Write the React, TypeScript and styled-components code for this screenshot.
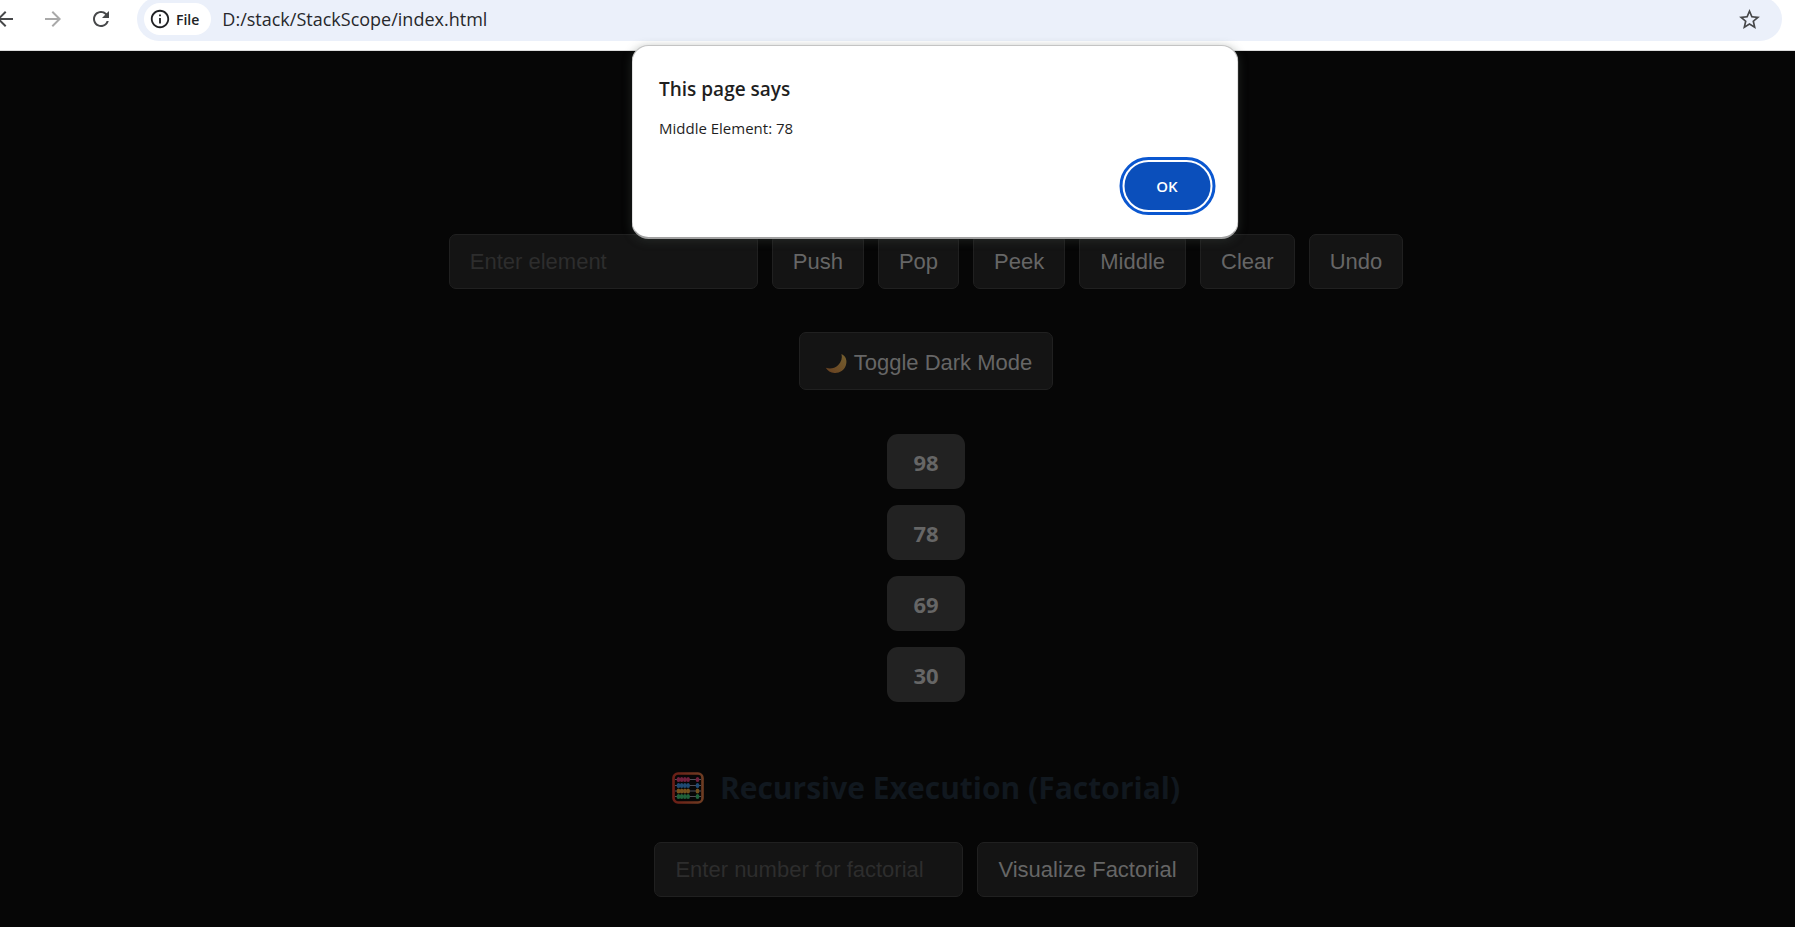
import React from "react";
import styled, { createGlobalStyle } from "styled-components";
import {
  MdArrowBack,
  MdArrowForward,
  MdOutlineInfo,
  MdRefresh,
  MdStarOutline,
} from "react-icons/md";

const uiFont = '"Open Sans", "Noto Sans", sans-serif';
const controlFont = '"Liberation Sans", Arial, sans-serif';

const GlobalStyle = createGlobalStyle`
  *, *::before, *::after { box-sizing: border-box; }
  html, body { margin: 0; background: #060606; }
  body { font-family: ${uiFont}; }
  button, input { margin: 0; font: inherit; }
`;

const Screen = styled.div`
  position: relative;
  display: flex;
  flex-direction: column;
  min-height: 100vh;
  overflow: hidden;
`;

const Toolbar = styled.header`
  display: flex;
  align-items: flex-end;
  gap: 24px;
  height: 51px;
  padding: 0 13px 9px 0;
  background: #ffffff;
  border-bottom: 1px solid #dcdcdc;
`;

const NavButtons = styled.nav`
  display: flex;
  align-items: center;
  gap: 24px;
  height: 44px;
  margin-left: -7px;
`;

const IconButton = styled.button<{ $muted?: boolean }>`
  display: flex;
  padding: 0;
  border: 0;
  background: none;
  color: ${(p) => (p.$muted ? "#a9a9a9" : "#47484a")};
`;

const AddressBar = styled.div`
  display: flex;
  flex: 1;
  align-items: center;
  height: 44px;
  padding: 0 20px 0 7px;
  border-radius: 22px;
  background: #ebf0fa;
`;

const SchemeChip = styled.button`
  display: flex;
  align-items: center;
  gap: 5px;
  height: 32px;
  padding: 0 12px 0 5px;
  border: 0;
  border-radius: 16px;
  background: #ffffff;
  color: #202124;
  font-size: 14px;
  font-weight: 600;
`;

const AddressInput = styled.input`
  flex: 1;
  min-width: 0;
  padding: 0 11px;
  border: 0;
  background: none;
  color: #27282b;
  font-size: 18px;
`;

const Page = styled.main`
  display: flex;
  flex: 1;
  flex-direction: column;
  align-items: center;
  padding: 183px 0 30px 57px;
  background: #060606;
`;

const ControlRow = styled.div`
  display: flex;
  gap: 14px;
`;

const TextField = styled.input`
  width: 309px;
  height: 55px;
  padding: 0 20px;
  border: 1px solid #202020;
  border-radius: 7px;
  background: #141414;
  color: #666666;
  font-family: ${controlFont};
  font-size: 22px;
  &::placeholder { color: #2d2d2d; opacity: 1; }
`;

const ActionButton = styled.button`
  height: 55px;
  padding: 0 20px;
  border: 1px solid #202020;
  border-radius: 7px;
  background: #141414;
  color: #666666;
  font-family: ${controlFont};
  font-size: 22px;
  white-space: nowrap;
`;

const ThemeButton = styled(ActionButton)`
  display: flex;
  align-items: center;
  gap: 4px;
  height: 58px;
  margin: 43px 0 44px;
  padding: 3px 20px 0;
`;

const StackList = styled.ol`
  display: flex;
  flex-direction: column;
  gap: 16px;
  margin: 0;
  padding: 0;
  list-style: none;
`;

const StackItem = styled.li`
  display: flex;
  align-items: center;
  justify-content: center;
  width: 78px;
  height: 55px;
  border-radius: 11px;
  background: #222222;
  color: #666666;
  font-size: 22px;
  font-weight: 700;
`;

const SectionTitle = styled.h2`
  display: flex;
  align-items: center;
  gap: 16px;
  margin: 64px 0 32px;
  color: #11181f;
  font-size: 30px;
  line-height: 44px;
  font-weight: 700;
  white-space: nowrap;
`;

const Dialog = styled.section`
  position: absolute;
  top: 45px;
  left: calc(50% + 37px);
  display: flex;
  flex-direction: column;
  width: 607px;
  height: 194px;
  padding: 29px 27px 27px;
  transform: translateX(-50%);
  border: 1px solid #c4c4c4;
  border-bottom: 2px solid #a0a0a0;
  border-radius: 17px;
  background: #ffffff;
  color: #1f1f1f;
  box-shadow: 0 2px 10px rgba(60, 70, 66, 0.4);
`;

const DialogTitle = styled.h1`
  margin: 0 0 13px;
  font-size: 19px;
  line-height: 28px;
  font-weight: 600;
`;

const DialogText = styled.p`
  margin: 0;
  font-size: 15px;
  line-height: 24px;
`;

const OkButton = styled.button`
  align-self: flex-end;
  width: 86px;
  height: 48px;
  margin-top: auto;
  border: 0;
  border-radius: 24px;
  outline: 3px solid #0b57d0;
  outline-offset: 2px;
  background: #0b4fbb;
  color: #ffffff;
  font-size: 15px;
  font-weight: 600;
`;

function Moon() {
  return (
    <svg width="30" height="24" viewBox="0 0 30 24" aria-hidden="true">
      <defs>
        <linearGradient id="moon" x1="1" y1="0" x2="0" y2="1">
          <stop offset="0" stopColor="#75602f" />
          <stop offset="1" stopColor="#684020" />
        </linearGradient>
      </defs>
      <path
        d="M21.500 3C26 5 27.500 10 25.800 14.500C24 19.500 19.500 22.200 14.500 21.900C10.800 21.700 7.500 20 5.800 16.800C10 18.200 14.500 17.500 18 14.300C21.300 11.200 22.500 7 21.500 3Z"
        fill="url(#moon)"
      />
    </svg>
  );
}

const beadRows = [
  { y: 7.5, color: "#70203d" },
  { y: 13.5, color: "#1f4a73" },
  { y: 19, color: "#75501c" },
  { y: 24.5, color: "#20623a" },
];

function Abacus() {
  return (
    <svg width="32" height="32" viewBox="0 0 32 32" aria-hidden="true">
      <defs>
        <linearGradient id="frame" x1="0" y1="0" x2="1" y2="0">
          <stop offset="0" stopColor="#6b1e16" />
          <stop offset="1" stopColor="#6e3c22" />
        </linearGradient>
      </defs>
      <rect x="1.500" y="1.500" width="29" height="29" rx="4.500" fill="none" stroke="url(#frame)" strokeWidth="2.600" />
      {beadRows.map((row) => (
        <g key={row.y} fill={row.color}>
          <path d={`M3 ${row.y}H29`} stroke="#514f58" strokeWidth="1" />
          {[6.5, 9.7, 12.9, 16.1, 25.5].map((x) => (
            <ellipse key={x} cx={x} cy={row.y} rx="1.900" ry="2.500" />
          ))}
        </g>
      ))}
    </svg>
  );
}

const actions = ["Push", "Pop", "Peek", "Middle", "Clear", "Undo"];
const stack = [98, 78, 69, 30];

export default function App() {
  return (
    <Screen>
      <GlobalStyle />
      <Toolbar>
        <NavButtons aria-label="Browser navigation">
          <IconButton aria-label="Back"><MdArrowBack size={24} /></IconButton>
          <IconButton aria-label="Forward" $muted><MdArrowForward size={24} /></IconButton>
          <IconButton aria-label="Reload"><MdRefresh size={24} /></IconButton>
        </NavButtons>
        <AddressBar>
          <SchemeChip>
            <MdOutlineInfo size={22} />
            File
          </SchemeChip>
          <AddressInput aria-label="Address" defaultValue="D:/stack/StackScope/index.html" />
          <IconButton aria-label="Bookmark this page"><MdStarOutline size={25} /></IconButton>
        </AddressBar>
      </Toolbar>

      <Page>
        <ControlRow>
          <TextField aria-label="Element" placeholder="Enter element" />
          {actions.map((label) => (
            <ActionButton key={label}>{label}</ActionButton>
          ))}
        </ControlRow>
        <ThemeButton>
          <Moon />
          Toggle Dark Mode
        </ThemeButton>
        <StackList>
          {stack.map((value) => (
            <StackItem key={value}>{value}</StackItem>
          ))}
        </StackList>
        <SectionTitle>
          <Abacus />
          Recursive Execution (Factorial)
        </SectionTitle>
        <ControlRow>
          <TextField aria-label="Number" placeholder="Enter number for factorial" />
          <ActionButton>Visualize Factorial</ActionButton>
        </ControlRow>
      </Page>

      <Dialog role="alertdialog" aria-labelledby="dialog-title" aria-describedby="dialog-text">
        <DialogTitle id="dialog-title">This page says</DialogTitle>
        <DialogText id="dialog-text">Middle Element: 78</DialogText>
        <OkButton>OK</OkButton>
      </Dialog>
    </Screen>
  );
}
